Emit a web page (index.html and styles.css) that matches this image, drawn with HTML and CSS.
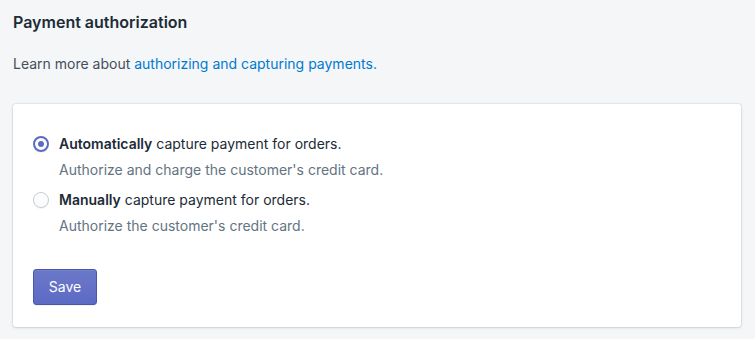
FILE: index.html
```html
<!DOCTYPE html>
<html>
<head>
<meta charset="utf-8">
<link rel="stylesheet" href="styles.css">
</head>
<body>
<div class="page">
  <h2 class="title">Payment authorization</h2>
  <p class="intro">Learn more about <a class="link" href="#">authorizing and capturing payments.</a></p>
  <div class="card">
    <div class="options">
      <label class="option">
        <span class="radio checked"><span class="dot"></span></span>
        <span class="opt-text">
          <span class="opt-label"><strong>Automatically</strong> capture payment for orders.</span>
          <span class="opt-help">Authorize and charge the customer's credit card.</span>
        </span>
      </label>
      <label class="option">
        <span class="radio"></span>
        <span class="opt-text">
          <span class="opt-label"><strong>Manually</strong> capture payment for orders.</span>
          <span class="opt-help">Authorize the customer's credit card.</span>
        </span>
      </label>
    </div>
    <button class="btn">Save</button>
  </div>
</div>
</body>
</html>
```

FILE: styles.css
```css
html, body {
  margin: 0;
  padding: 0;
  background: #f4f6f8;
}
body {
  font-family: Inter, "Noto Sans", "Liberation Sans", sans-serif;
  color: #212b36;
  width: 755px;
  height: 339px;
  overflow: hidden;
}
.page {
  padding: 12px 14px 0 13px;
}
.title {
  margin: 0;
  font-size: 16px;
  font-weight: 600;
  line-height: 20px;
  color: #212b36;
}
.intro {
  margin: 22px 0 0 0;
  font-size: 14px;
  line-height: 20px;
  color: #454f5b;
}
.link {
  color: #007ace;
  text-decoration: none;
}
.card {
  margin-top: 30px;
  background: #fff;
  border-radius: 3px;
  box-shadow: 0 0 0 1px rgba(63,63,68,0.07), 0 1px 3px 0 rgba(63,63,68,0.15);
  padding: 30px 20px 20px 20px;
  height: 173px;
}
.options {
  display: flex;
  flex-direction: column;
  gap: 10px;
}
.option {
  display: flex;
  gap: 10px;
  align-items: flex-start;
}
.radio {
  flex: none;
  width: 14px;
  height: 14px;
  margin-top: 2px;
  border: 1px solid #c4cdd5;
  border-radius: 50%;
  background: linear-gradient(#fff, #f9fafb);
  box-shadow: 0 1px 0 rgba(22,29,37,0.05);
  display: flex;
  align-items: center;
  justify-content: center;
}
.radio.checked {
  border: 2px solid #5c6ac4;
  width: 12px;
  height: 12px;
}
.dot {
  width: 6px;
  height: 6px;
  border-radius: 50%;
  background: #5c6ac4;
}
.opt-text {
  display: flex;
  flex-direction: column;
  gap: 6px;
}
.opt-label {
  font-size: 14px;
  line-height: 20px;
  color: #212b36;
}
.opt-label strong {
  font-weight: 600;
}
.opt-help {
  font-size: 14px;
  line-height: 20px;
  color: #637381;
}
.btn {
  margin-top: 33px;
  width: 64px;
  height: 36px;
  border: 1px solid #3f4eae;
  border-radius: 3px;
  background: linear-gradient(#6371c7, #5563c1);
  box-shadow: inset 0 1px 0 0 #6f7bcb, 0 1px 0 0 rgba(22,29,37,0.05);
  color: #fff;
  font-family: inherit;
  font-size: 14px;
  line-height: 20px;
  padding: 0;
  opacity: 0.95;
}
```
